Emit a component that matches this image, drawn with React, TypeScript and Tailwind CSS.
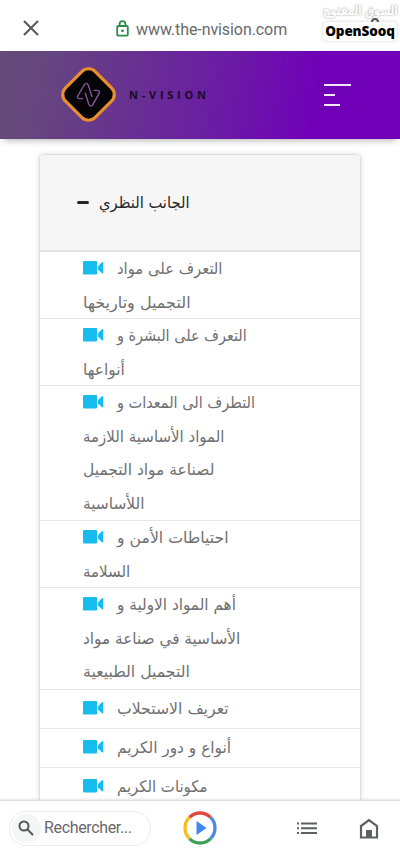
type Lesson = {
  id: number;
  height: string;
  // fit is the horizontal condensing of each line
  lines: { text: string; fit: number }[];
};

const lessons: Lesson[] = [
  {
    id: 1,
    height: 'h-[67px]',
    lines: [
      { text: 'التعرف على مواد', fit: 0.925 },
      { text: 'التجميل وتاريخها', fit: 1 },
    ],
  },
  {
    id: 2,
    height: 'h-[67px]',
    lines: [
      { text: 'التعرف على البشرة و', fit: 0.9 },
      { text: 'أنواعها', fit: 0.96 },
    ],
  },
  {
    id: 3,
    height: 'h-[135px]',
    lines: [
      { text: 'التطرف الى المعدات و', fit: 0.905 },
      { text: 'المواد الأساسية اللازمة', fit: 0.937 },
      { text: 'لصناعة مواد التجميل', fit: 0.967 },
      { text: 'اللأساسية', fit: 0.96 },
    ],
  },
  {
    id: 4,
    height: 'h-[67px]',
    lines: [
      { text: 'احتياطات الأمن و', fit: 0.98 },
      { text: 'السلامة', fit: 0.94 },
    ],
  },
  {
    id: 5,
    height: 'h-[102px]',
    lines: [
      { text: 'أهم المواد الاولية و', fit: 0.955 },
      { text: 'الأساسية في صناعة مواد', fit: 0.955 },
      { text: 'التجميل الطبيعية', fit: 0.98 },
    ],
  },
  { id: 6, height: 'h-[39px]', lines: [{ text: 'تعريف الاستحلاب', fit: 0.98 }] },
  { id: 7, height: 'h-[39px]', lines: [{ text: 'أنواع و دور الكريم', fit: 0.96 }] },
  { id: 8, height: 'h-[39px]', lines: [{ text: 'مكونات الكريم', fit: 0.93 }] },
];

function VideoIcon() {
  return (
    <svg width="21" height="14" viewBox="0 0 21 14" className="-mt-px mr-[13px] shrink-0" fill="#17bcec">
      <rect x="0" y="0" width="14" height="13.5" rx="1" />
      <path d="M15 5.2 18.6 1.6q1.7-1.2 1.7.5v9.3q0 1.7-1.7.5L15 8.3z" />
    </svg>
  );
}

function BrowserBar() {
  return (
    <div className="relative flex h-[51px] shrink-0 items-center pt-[7px]">
      <svg width="16" height="16" viewBox="0 0 16 16" className="-mt-[2px] ml-[23px]" stroke="#5b5b5d" strokeWidth="2.1">
        <path d="M1 1l14 14M15 1L1 15" />
      </svg>
      <svg width="14" height="17" viewBox="0 0 14 17" className="-mt-[2px] ml-[77px]" fill="none" stroke="#2c8c4b" strokeWidth="1.8">
        <rect x="1.2" y="6" width="10.6" height="9.6" rx="1" />
        <path d="M3.6 6V4a2.9 2.9 0 0 1 5.8 0v2" />
        <circle cx="6.5" cy="10.8" r="1.4" fill="#2c8c4b" stroke="none" />
      </svg>
      <span className="mt-px ml-[6px] font-[Roboto,sans-serif] text-[16px] leading-5 tracking-[-0.08px] whitespace-nowrap text-[#68696c]">
        www.the-nvision.com
      </span>
      <div className="absolute top-0 left-[322px] flex w-[76px] flex-col items-center">
        <span
          dir="rtl"
          className="h-[22px] scale-x-[0.74] font-['DejaVu_Sans',sans-serif] text-[13.5px] leading-[21px] font-bold whitespace-nowrap text-white [text-shadow:0_0_2px_#aaa,0_0_2px_#bbb]"
        >
          السوق المفتوح
        </span>
        <svg width="8" height="5" viewBox="0 0 8 5" className="absolute top-[17px] left-[49px]">
          <path d="M1 5a3 3 0 0 1 6 0" fill="none" stroke="#555" strokeWidth="2" />
        </svg>
        <div className="flex h-[19px] w-[74px] items-center justify-center rounded-[4px] bg-white pb-px font-['Noto_Sans',sans-serif] text-[13.5px] font-black tracking-[-0.1px] text-black shadow-[0_0_3px_#ccc]">
          OpenSooq
        </div>
      </div>
    </div>
  );
}

function SiteHeader() {
  return (
    <header className="flex h-[88px] shrink-0 items-center bg-[linear-gradient(100deg,#664a79_0%,#65477d_10%,#683092_34%,#6b1ba5_56%,#7000b8_78%,#7100b7_100%)] shadow-[0_5px_7px_-4px_#aaa]">
      <svg width="57" height="57" viewBox="0 0 57 57" className="-mt-[2px] ml-[60px]">
        <rect x="7.5" y="7.5" width="42" height="42" rx="9.5" transform="rotate(45 28.5 28.5)" fill="#050406" stroke="#e98f2e" strokeWidth="3.2" />
        <g fill="none" stroke="#80589f" strokeWidth="1.4" strokeLinecap="round" strokeLinejoin="round">
          <path d="M22.5 32.6h-3.3q-2.6-.4-1.5-2.6l6.6-11.2q2.3-3 4 .4l3.6 11.2" />
          <path d="M34 24.4h3.6q2.6.6 1.6 2.7l-6.4 11.5q-2.3 3-4-.4l-3.5-11" />
        </g>
      </svg>
      <span className="ml-[12px] font-['Open_Sans',sans-serif] text-[11px] leading-4 font-bold tracking-[3.75px] whitespace-nowrap text-[#190b24]">
        N-VISION
      </span>
      <div className="mr-[49px] ml-auto flex w-[27px] flex-col gap-[8px]">
        <span className="h-[2px] w-[27px] bg-[#f3e6fa]" />
        <span className="h-[2px] w-[11px] bg-[#f3e6fa]" />
        <span className="h-[2px] w-[16px] bg-[#f3e6fa]" />
      </div>
    </header>
  );
}

function LessonRow({ lesson }: { lesson: Lesson }) {
  return (
    <li
      className={`${lesson.height} ${lesson.lines.length === 1 ? 'pt-[2px]' : ''} shrink-0 border-b border-[#e7e7e8] pl-[43px] text-[#707072]`}
    >
      {lesson.lines.map((line, i) => (
        <div key={line.text} className="flex h-[33.5px] items-center">
          {i === 0 && <VideoIcon />}
          <span
            dir="rtl"
            className="origin-left font-['DejaVu_Sans',sans-serif] text-[16px] leading-[33px] whitespace-nowrap"
            style={{ transform: `scaleX(${line.fit})` }}
          >
            {line.text}
          </span>
        </div>
      ))}
    </li>
  );
}

function BottomBar() {
  return (
    <nav className="z-10 flex h-[54px] shrink-0 items-center bg-white shadow-[0_-1px_3px_#ccc]">
      <div className="ml-[9px] flex h-[35px] w-[142px] items-center rounded-full border border-[#ececee]">
        <div className="ml-[2px] flex size-[29px] items-center justify-center rounded-full bg-[#f4f5f6]">
          <svg width="16" height="16" viewBox="0 0 16 16" className="-ml-px" fill="none" stroke="#555659" strokeWidth="2">
            <circle cx="6" cy="6" r="4.5" />
            <path d="M9.4 9.4 15 15" />
          </svg>
        </div>
        <span className="ml-[3px] font-[Roboto,sans-serif] text-[16px] tracking-[-0.35px] text-[#67686b]">Rechercher...</span>
      </div>
      <svg width="34" height="34" viewBox="0 0 34 34" className="ml-[32px]" fill="none" strokeWidth="3.3">
        <path d="M6.4 6.4a15 15 0 0 1 21.2 0" stroke="#dd4b40" />
        <path d="M27.6 6.4a15 15 0 0 1 0 21.2" stroke="#4b86e8" />
        <path d="M27.6 27.6a15 15 0 0 1-21.2 0" stroke="#3c9f58" />
        <path d="M6.4 27.6a15 15 0 0 1 0-21.2" stroke="#f7bd19" />
        <path d="M13.5 10v14l10-7z" fill="#4285f4" />
      </svg>
      <svg width="21" height="13" viewBox="0 0 21 13" className="ml-[80px]" fill="#5f6063">
        <path d="M0 .5h2v2H0zM4 .5h16v2H4zM0 5.3h2v2H0zM4 5.3h16v2H4zM0 10h2v2H0zM4 10h16v2H4z" />
      </svg>
      <svg width="20" height="21" viewBox="0 0 20 21" className="ml-[41px]">
        <path d="M2 8 10 2l8 6v11.5H2z" fill="none" stroke="#5f6063" strokeWidth="2.2" />
        <path d="M7 12h6v7.5H7z" fill="#5f6063" />
      </svg>
    </nav>
  );
}

export default function App() {
  return (
    <div className="flex h-[855px] w-[400px] flex-col overflow-hidden bg-white">
      <BrowserBar />
      <SiteHeader />
      <main className="min-h-0 flex-1 overflow-hidden px-[39px] pt-[15px]">
        <section className="rounded-t-[4px] border border-[#dedee0] shadow-[0_0_5px_#ddd]">
          <div className="flex h-[97px] items-center rounded-t-[3px] border-b-2 border-[#e1e1e2] bg-[#f6f6f6] pl-[37px] text-[#272729]">
            <span className="h-[3px] w-[12px] rounded-sm bg-[#242426]" />
            <span dir="rtl" className="ml-[10px] origin-left scale-x-[0.92] font-['DejaVu_Sans',sans-serif] text-[16px] whitespace-nowrap">
              الجانب النظري
            </span>
          </div>
          <ul className="flex flex-col">
            {lessons.map((lesson) => (
              <LessonRow key={lesson.id} lesson={lesson} />
            ))}
          </ul>
        </section>
      </main>
      <BottomBar />
    </div>
  );
}
